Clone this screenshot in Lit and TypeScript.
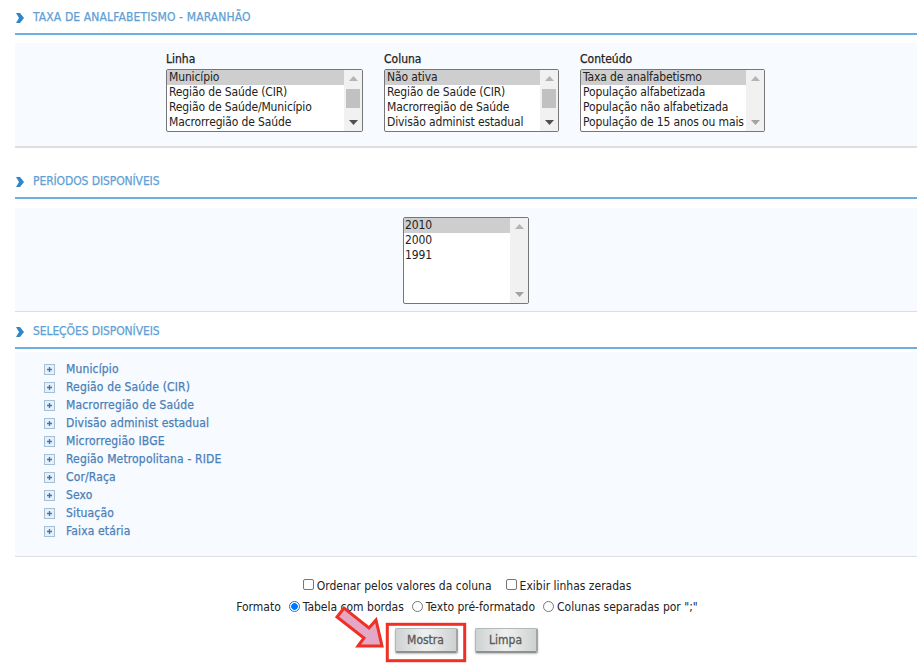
import { LitElement, html, css, svg } from "lit";
import { customElement } from "lit/decorators.js";

const FONT = css`"DejaVu Sans", "Noto Sans", sans-serif`;

@customElement("list-box")
class ListBox extends LitElement {
  static properties = {
    items: { type: Array },
    thumb: { type: Boolean },
    muted: { type: Boolean },
    tall: { type: Boolean },
    boxWidth: { type: Number },
  };
  declare items: string[];
  declare thumb: boolean;
  declare muted: boolean;
  declare tall: boolean;
  declare boxWidth: number;
  constructor() {
    super();
    this.items = [];
    this.thumb = false;
    this.muted = false;
    this.tall = false;
    this.boxWidth = 197;
  }
  static styles = css`
    :host { display: block; }
    .box {
      display: flex; box-sizing: border-box; height: 63px;
      border: 1px solid #767676; border-radius: 2px; background: #fff;
      font: 12px/15px ${FONT}; font-stretch: condensed; letter-spacing: -0.13px; color: #222; overflow: hidden;
    }
    .box.tall { height: 87px; }
    .list { flex: 1; min-width: 0; }
    .opt { height: 15px; padding-left: 2px; white-space: nowrap; overflow: hidden; }
    .tall .opt { padding-left: 1px; }
    .opt.sel { background: #cecece; }
    .bar { flex: none; width: 18px; background: #f1f1f1; display: flex; flex-direction: column; align-items: center; }
    .arrow { flex: none; height: 17px; display: flex; align-items: center; justify-content: center; }
    .track { flex: 1; width: 100%; box-sizing: border-box; padding: 0 2px; }
    .thumb { height: 19px; margin-top: 2px; background: #c1c1c1; }
    svg { display: block; }
  `;
  arrow(up: boolean, color: string) {
    return html`<div class="arrow"><svg width="9" height="5" viewBox="0 0 9 5">
      ${svg`<path d=${up ? "M4.5 0L9 5H0Z" : "M0 0H9L4.5 5Z"} fill=${color}></path>`}
    </svg></div>`;
  }
  render() {
    const up = "#b4b4b4";
    const down = this.muted ? "#a3a3a3" : "#505050";
    return html`<div class="box ${this.tall ? "tall" : ""}" style="width:${this.boxWidth}px">
      <div class="list">
        ${this.items.map((t, i) => html`<div class="opt ${i === 0 ? "sel" : ""}">${t}</div>`)}
      </div>
      <div class="bar">
        ${this.arrow(true, up)}
        <div class="track">${this.thumb ? html`<div class="thumb"></div>` : ""}</div>
        ${this.arrow(false, this.tall ? "#a3a3a3" : down)}
      </div>
    </div>`;
  }
}

@customElement("section-head")
class SectionHead extends LitElement {
  static properties = { label: { type: String } };
  declare label: string;
  constructor() {
    super();
    this.label = "";
  }
  static styles = css`
    :host { display: block; letter-spacing: 0.13px; }
    :host(.h2), :host(.h3) { letter-spacing: -0.1px; }
    .head {
      display: flex; align-items: center; gap: 9px; height: 35px; box-sizing: border-box;
      border-bottom: 2px solid #6bb0e0; padding: 1px 0 0 1px;
      font: 12px ${FONT}; font-stretch: condensed; color: #609fd6; -webkit-text-stroke: 0.25px #609fd6;
    }
    svg { display: block; margin-top: 2px; }
  `;
  render() {
    return html`<div class="head">
      <svg width="8" height="10" viewBox="0 0 8 10"><path d="M0 0H4L8 5L4 10H0L3 5Z" fill="#2f86c8"></path></svg>
      <span>${this.label}</span>
    </div>`;
  }
}

@customElement("app-root")
class AppRoot extends LitElement {
  static styles = css`
    :host { display: block; width: 922px; height: 672px; position: relative; overflow: hidden; background: #fff;
      font: 12px ${FONT}; font-stretch: condensed; color: #222; }
    .page { padding: 0 5px 0 15px; }
    .panel { background: #f7faff; border-bottom: 2px solid #dedede; }
    .p1 { margin-top: 8px; height: 105px; box-sizing: border-box; padding: 9px 0 0 151px; display: flex; gap: 21px; }
    .lab { line-height: 14px; margin-bottom: 3px; color: #222; -webkit-text-stroke: 0.25px #222; }
    .h2 { margin-top: 16px; }
    .p2 { margin-top: 9px; height: 104px; box-sizing: border-box; padding-top: 9px; display: flex; justify-content: center; border-bottom-width: 1px; }
    .h3 { margin-top: 2px; }
    .p3 { margin-top: 3px; height: 205px; box-sizing: border-box; padding: 8px 0 0 29px; border-bottom-width: 1px; }
    .tree { display: flex; align-items: center; gap: 11px; height: 18px; color: #4a80b8; letter-spacing: 0.15px; -webkit-text-stroke: 0.25px #4a80b8; }
    .plus { display: block; flex: none; }
    .opts { text-align: center; line-height: 15px; }
    .row { display: flex; justify-content: center; align-items: center; }
    .r1 { margin-top: 18px; height: 22px; gap: 14px; padding-left: 2px; }
    .r2 { height: 21px; gap: 8px; padding-left: 2px; }
    .item { display: flex; align-items: center; gap: 3px; }
    .ck { width: 11px; height: 11px; box-sizing: border-box; border: 1px solid #767676; border-radius: 2px; background: #fff; margin-top: -4px; }
    .rd { width: 11px; height: 11px; box-sizing: border-box; border: 1px solid #767676; border-radius: 50%; background: #fff; margin-top: -3px; }
    .rd.on { border: 1px solid #0075ff; background: radial-gradient(circle, #0075ff 0 3px, #fff 3.6px); }
    .btns { display: flex; justify-content: center; gap: 17px; margin-top: 10px; }
    .btn {
      width: 63px; height: 25px; box-sizing: border-box; display: flex; align-items: center; justify-content: center;
      border: 1px solid #b5b8b8; border-bottom: 2px solid #8f9191; border-right: 2px solid #a3a5a5; border-radius: 2px;
      background: linear-gradient(90deg, #cfd2d2, #eef0f0 50%, #cfd2d2);
      box-shadow: 0 1px 2px rgba(0,0,0,.25);
      color: #5a5a5a; -webkit-text-stroke: 0.3px #5a5a5a;
    }
    .mark { position: absolute; left: 0; top: 0; pointer-events: none; }
  `;
  render() {
    const tree = ["Município", "Região de Saúde (CIR)", "Macrorregião de Saúde", "Divisão administ estadual", "Microrregião IBGE", "Região Metropolitana - RIDE", "Cor/Raça", "Sexo", "Situação", "Faixa etária"];
    return html`<div class="page">
      <section-head label="TAXA DE ANALFABETISMO - MARANHÃO"></section-head>
      <div class="panel p1">
        <div><div class="lab">Linha</div>
          <list-box .boxWidth=${197} thumb .items=${["Município", "Região de Saúde (CIR)", "Região de Saúde/Município", "Macrorregião de Saúde"]}></list-box></div>
        <div><div class="lab">Coluna</div>
          <list-box .boxWidth=${175} thumb .items=${["Não ativa", "Região de Saúde (CIR)", "Macrorregião de Saúde", "Divisão administ estadual"]}></list-box></div>
        <div><div class="lab">Conteúdo</div>
          <list-box .boxWidth=${185} muted .items=${["Taxa de analfabetismo", "População alfabetizada", "População não alfabetizada", "População de 15 anos ou mais"]}></list-box></div>
      </div>
      <section-head class="h2" label="PERÍODOS DISPONÍVEIS"></section-head>
      <div class="panel p2">
        <list-box tall .boxWidth=${126} .items=${["2010", "2000", "1991"]}></list-box>
      </div>
      <section-head class="h3" label="SELEÇÕES DISPONÍVEIS"></section-head>
      <div class="panel p3">
        ${tree.map(t => html`<div class="tree">
          <svg class="plus" width="11" height="11" viewBox="0 0 11 11"><rect x=".5" y=".5" width="10" height="10" fill="#e8eff7" stroke="#a3c0da"></rect><path d="M3 5.5H8M5.5 3V8" stroke="#3d76ab" stroke-width="1.3"></path></svg>
          <span>${t}</span></div>`)}
      </div>
      <div class="opts">
        <div class="row r1">
          <span class="item"><span class="ck"></span>Ordenar pelos valores da coluna</span>
          <span class="item"><span class="ck"></span>Exibir linhas zeradas</span>
        </div>
        <div class="row r2">
          <span>Formato</span>
          <span class="item"><span class="rd on"></span>Tabela com bordas</span>
          <span class="item"><span class="rd"></span>Texto pré-formatado</span>
          <span class="item"><span class="rd"></span>Colunas separadas por ";"</span>
        </div>
        <div class="btns"><div class="btn">Mostra</div><div class="btn">Limpa</div></div>
      </div>
    </div>
    <svg class="mark" width="922" height="672" viewBox="0 0 922 672">
      <rect x="387.3" y="624.3" width="77.4" height="36.4" fill="none" stroke="#ee3124" stroke-width="3"></rect>
      <path d="M337 617L344 608L369 628L376 620L382 646L358 646L364 638Z" fill="#e4a8c6" stroke="#ee3124" stroke-width="3" stroke-linejoin="miter"></path>
    </svg>`;
  }
}
